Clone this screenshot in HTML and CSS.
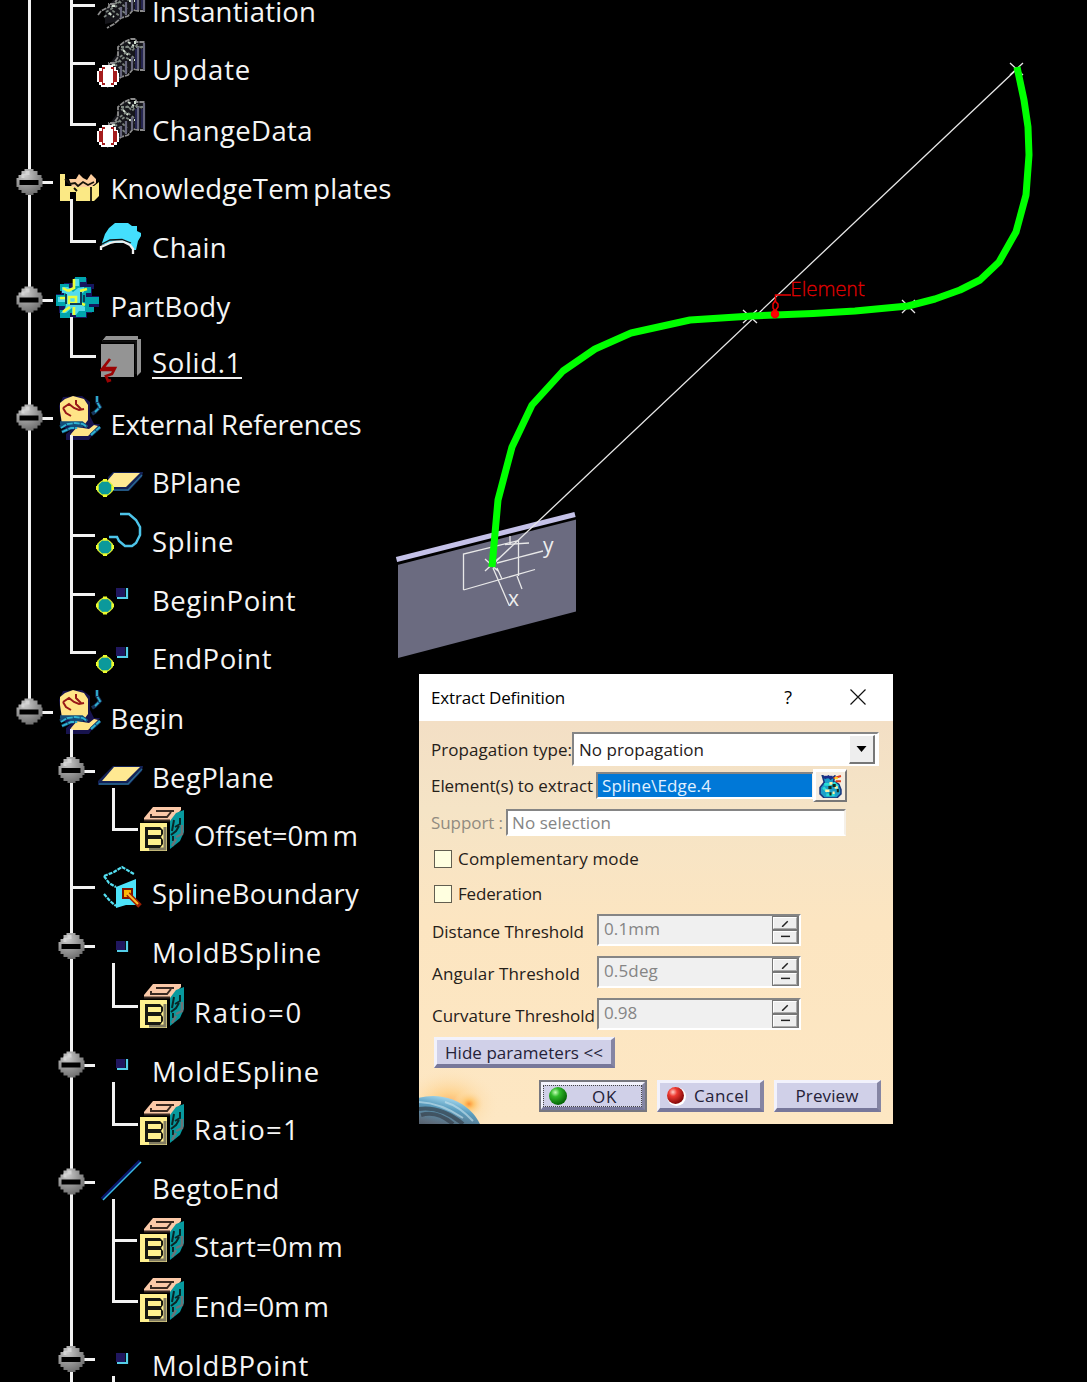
FILE: index.html
```html
<!DOCTYPE html>
<html lang="en">
<head>
<meta charset="utf-8">
<title>Extract Definition</title>
<link rel="stylesheet" href="styles.css">
</head>
<body>
<svg class="defs" aria-hidden="true">
  <defs>
    <radialGradient id="ball" cx=".35" cy=".25" r=".8"><stop offset="0" stop-color="#ccc"/><stop offset=".5" stop-color="#999"/><stop offset="1" stop-color="#6b6b6b"/></radialGradient>
    <radialGradient id="green" cx=".35" cy=".3" r=".7"><stop offset="0" stop-color="#c5ffb8"/><stop offset=".35" stop-color="#2fba2a"/><stop offset="1" stop-color="#056405"/></radialGradient>
    <radialGradient id="red" cx=".35" cy=".3" r=".7"><stop offset="0" stop-color="#ffd0c8"/><stop offset=".35" stop-color="#ee3a32"/><stop offset="1" stop-color="#850808"/></radialGradient>
    <radialGradient id="glow"><stop offset="0" stop-color="#ff9436"/><stop offset=".3" stop-color="#ffc468" stop-opacity=".9"/><stop offset="1" stop-color="#fde5c0" stop-opacity="0"/></radialGradient>
    <linearGradient id="planet" x1=".6" y1="0" x2=".45" y2=".6"><stop offset="0" stop-color="#a5d8ee"/><stop offset=".2" stop-color="#5a9dbf"/><stop offset=".5" stop-color="#5d6b7a"/><stop offset="1" stop-color="#18181c"/></linearGradient>

    <g id="node"><path d="M-5-13H4V-11H8V-7H12V-4H13V5H11V8H8V11H4V13H-4V11H-8V8H-11V5H-13V-4H-11V-7H-8V-11H-5Z" fill="url(#ball)"/><path d="M-8-8H-4V-11H0V-7H-5V-4H-8Z" fill="#d4d4d4"/><path d="M-10-2H9V3H-10Z" fill="#000"/></g>

    <g id="machine" fill="none" stroke-width="1.8">
      <path d="M19 17L27 3H48V32H34L22 42L8 45V32Z" fill="#16161b"/>
      <path d="M1 36L4 32L12 28V25H17L21 19V9L27 4L34 1H39V4H48M48 32H42L36 31L31 37L24 39L17 45L10 49" stroke="#8c8c8c" stroke-dasharray="5 1"/>
      <path d="M24 9H46M24 12L31 8L35 13L40 7L45 10M23 19L30 14L37 20M21 24L28 19L38 25M14 28L22 22L30 30M9 33L19 27L28 34M7 38L16 32L24 38" stroke="#7d867f" stroke-dasharray="3 2"/>
      <path d="M31 4L37 8M26 12L31 17M15 27H20M32 22H38M12 34L17 38M38 3V8" stroke="#d0ddce" stroke-width="2" stroke-dasharray="3 2"/>
      <path d="M41 9V31M47 5V32M35 19V32M29 23V36M24 28V39" stroke="#66667c" stroke-width="2.2"/>
      <path d="M39 11V31M45 11V30" stroke="#252550" stroke-width="2"/>
    </g>
    <g id="machine-ball"><use href="#machine"/><path d="M5 27H16V29H19V32H21V35H22V44H20V47H17V49H4V47H2V44H0V33H2V30H5Z" fill="#fff"/><path d="M8 29V31H6V45H8V47H5V44H2V33H5V29ZM14 29V31H16V45H14V47H17V44H20V33H17V29Z" fill="#a51c1c"/></g>
    <g id="templates"><path d="M0 0H5V12H34L39 8V22L34 27H16V18H10V27H0Z" fill="#fbe985"/><path d="M9 5H16L19 0L23 4L27 6L31 0L36 5V9L31 13H12Z" fill="#fdce9e"/><path d="M5 5L10 10L15 9L18 12L23 8L28 11L34 8M31 13V27M14 14L17 17" fill="none" stroke="#16130a" stroke-width="1.8"/></g>
    <g id="chain"><path d="M2 20L5 11L9 5L15 0H28L32 3H37V8L41 10V13L38 18L36 27H34L29 20L10 20L2 22Z" fill="#44dffd"/><path d="M1 27V24L10 20L17 18.500H23L30 22L33 26V31" fill="none" stroke="#eee" stroke-width="2.3"/><path d="M1 21.500L10 17L22 16.500L31 20" fill="none" stroke="#111" stroke-width="1.300"/></g>
    <g id="body"><path d="M8 6H18V1H31V7H38V12H36V19H43V30H36V36H31V41H10V36H3V24H0V17H5V11H8Z" fill="#16165e"/><path d="M19 0H30V5H24V10H35V16H30V20H43V27H33V30H38V35H30V40H20V36H14V41H4V33H9V29H0V18H8V14H4V7H13V11H18Z" fill="#00a5ad"/><path d="M17 2H23V9H18ZM6 10H12L17 15L22 11L28 10V15L24 18V27L29 30V34H23L20 38H16V31L10 36H5L10 30V25H2V20H10V16H6Z" fill="#55dcec"/><path d="M18 2V11L12 14M13 20H20V26H13ZM24 14L31 12M24 26L29 28M7 35L14 30M18 30V38M4 21H9M7 11L12 14" fill="none" stroke="#eaff39" stroke-width="2.600"/><path d="M25 15V27H14M28 18V25M10 17V27" fill="none" stroke="#0c3e5a" stroke-width="2"/></g>
    <g id="solid"><path d="M2 5L6 0H38V3H41V36L37 40V4H2Z" fill="#929292"/><path d="M1 8H34V41H1Z" fill="#949494"/><path d="M2 5.500H36V38" fill="none" stroke="#111" stroke-width="2"/><path d="M10 23L3 32H15L12 38L6 40L8 45L11 44M0 34H14" fill="none" stroke="#9b0303" stroke-width="2.700"/></g>
    <g id="refs"><path d="M5 1L24 0L32 6V20L36 28H42L31 44H8V38L13 34L4 31L1 10Z" fill="#17134d"/><path d="M2 7L7 3L15 0L26 3L30 9V24L27 28H4L2 15ZM13 38L19 31L31 33L36 29L40 30L30 40H12Z" fill="#ffe487"/><path d="M5 12L11 8L16 12L21 14L26 13M18 4V8L23 13M5 12L8 17L13 20" fill="none" stroke="#981818" stroke-width="2"/><path d="M39 0V6L42 11L37 16L34 18" fill="none" stroke="#17365d" stroke-width="3.600"/><path d="M2 27H15L24 27L29 31M2 31L9 28L17 29L25 30M4 36L13 32L19 31M33 39L42 31" fill="none" stroke="#134c78" stroke-width="3.500"/><path d="M39 0V6L42 11L37 16M3 32L9 28L17 27L25 28L29 31M4 36L13 32L19 32M33 39L42 31" fill="none" stroke="#2fb4d2" stroke-width="1.800" stroke-dasharray="6 1"/></g>
    <g id="plane"><path d="M15 0H45L44 5L31 19H0V15L3 12Z" fill="#132155"/><path d="M16 1H42L28 15H4Z" fill="#ffe992"/><path d="M1 18H30L44 3" fill="none" stroke="#286990" stroke-width="1.400"/></g>
    <g id="diamond"><path d="M-2-8H2L5-6L8-3V3L5 6L2 8H-2L-5 6L-8 3V-3L-5-6Z" fill="#d8f030"/><path d="M-2-9H2V9H-2ZM-9-2V2H9V-2Z" fill="#eefb2c"/><path d="M-3-6H3L6-3V3L3 6H-3L-6 3V-3Z" fill="#0b999b" stroke="#0b999b" stroke-width=".6"/></g>
    <g id="point"><path d="M0 0H9V9H0Z" fill="#20175f"/><path d="M1 10H11V0" fill="none" stroke="#54cee8" stroke-width="2.200"/></g>
    <g id="cube"><path d="M13 0H41V3L31 14H4V11Z" fill="#fbc9a8"/><path d="M30 14L36 6L44 3V25L40 34L30 42Z" fill="#07999e"/><path d="M0 16H27V44H0Z" fill="#fff08e"/><path d="M16 4H34M11 7V10H27L31 5M4 13.500H30" fill="none" stroke="#3a2a22" stroke-width="2"/><path d="M40 11V17L35 20M34 13L32 24M31 28L36 24L39 19M33 34V29" fill="none" stroke="#0a2626" stroke-width="2"/><path d="M42 18V27L36 30M32 39L36 32" fill="none" stroke="#6a7478" stroke-width="2.500"/><path d="M38 38L44 29V44H34Z" fill="#000"/><path d="M25 20V42H9" fill="none" stroke="#817b61" stroke-width="3"/><path d="M5 20H20L23 23V27L21 30L23 33V37L20 41H5ZM8 23V28H21V23ZM8 32V38H21V32Z" fill="#181812" fill-rule="evenodd"/><path d="M28.500 15V44" stroke="#000" stroke-width="3"/></g>
    <g id="boundary"><path d="M2 9L12 5L20 0L32 7M2 9L7 16L14 20M2 27L8 34L14 39" fill="none" stroke="#54dff1" stroke-width="2.200" stroke-dasharray="4 1"/><path d="M14 20L34 12V38H24L14 41Z" fill="#4de3fa"/><path d="M21 22H30V31H21Z" fill="#fcb700" stroke="#7d1500" stroke-width="2"/><path d="M26 27L38 39" stroke="#9c1d00" stroke-width="5"/><path d="M25 26L36 37" stroke="#ffbd25" stroke-width="2"/></g>
    <g id="segment"><path d="M0 38L38 0" stroke="#0b176b" stroke-width="3.600"/><path d="M1 39L39 1" stroke="#39bce3" stroke-width="1.400"/></g>

    <path id="v1" d="M29.500 0V64"/><path id="v2" d="M71.500 0V64"/><path id="v3" d="M113.500 0V64"/>
    <path id="v1e" d="M29.500 0V21"/><path id="v2e" d="M71.500 0V22.500H96"/><path id="v3e" d="M113.500 0V22.500H138"/>
    <path id="v2s" d="M71.500 39V64"/><path id="v3s" d="M113.500 39V64"/>
    <path id="h1" d="M42 22.500H53"/><path id="h2" d="M71.500 22.500H95"/><path id="h3" d="M113.500 22.500H137"/>
  </defs>
</svg>

<main class="workspace">
  <ul class="tree">
    <li class="row"><svg class="art l2"><use href="#v1"/><use href="#v2"/><use href="#h2"/><use href="#machine" x="97" y="-4"/></svg><span class="label" data-w="164">Instantiation</span></li>
    <li class="row"><svg class="art l2"><use href="#v1"/><use href="#v2"/><use href="#h2"/><use href="#machine-ball" x="97" y="-3"/></svg><span class="label" data-w="99">Update</span></li>
    <li class="row"><svg class="art l2"><use href="#v1"/><use href="#v2e"/><use href="#machine-ball" x="97" y="-4"/></svg><span class="label" data-w="161">ChangeData</span></li>
    <li class="row"><svg class="art l1"><use href="#v1"/><use href="#h1"/><use href="#node" x="29.500" y="22"/><use href="#templates" x="60" y="14"/><use href="#v2s"/></svg><span class="label" data-w="281">KnowledgeTem<i class="gap"></i>plates</span></li>
    <li class="row"><svg class="art l2"><use href="#v1"/><use href="#v2e"/><use href="#chain" x="100" y="4"/></svg><span class="label" data-w="75">Chain</span></li>
    <li class="row"><svg class="art l1"><use href="#v1"/><use href="#h1"/><use href="#node" x="29.500" y="21.500"/><use href="#body" x="56" y="-1"/><use href="#v2s"/></svg><span class="label" data-w="120">PartBody</span></li>
    <li class="row"><svg class="art l2"><use href="#v1"/><use href="#v2e"/><use href="#solid" x="100" y="2"/></svg><span class="label current" data-w="90">Solid.1</span></li>
    <li class="row"><svg class="art l1"><use href="#v1"/><use href="#h1"/><use href="#node" x="29.500" y="21.500"/><use href="#refs" x="58" y="0"/><use href="#v2s"/></svg><span class="label" data-w="251">External References</span></li>
    <li class="row"><svg class="art l2"><use href="#v1"/><use href="#v2"/><use href="#h2"/><use href="#plane" x="98" y="18"/><path d="M96 18H108V40H96Z" class="mask"/><use href="#diamond" x="105" y="34"/></svg><span class="label" data-w="89">BPlane</span></li>
    <li class="row"><svg class="art l2"><use href="#v1"/><use href="#v2"/><use href="#h2"/><path class="spline" d="M120 1H129L136 7L140 14V22L136 30L132 33H125L119 28L117 24H109"/><use href="#diamond" x="105" y="34"/></svg><span class="label" data-w="82">Spline</span></li>
    <li class="row"><svg class="art l2"><use href="#v1"/><use href="#v2"/><use href="#h2"/><use href="#point" x="116" y="16"/><use href="#diamond" x="105" y="33.500"/></svg><span class="label" data-w="144">BeginPoint</span></li>
    <li class="row"><svg class="art l2"><use href="#v1"/><use href="#v2e"/><use href="#point" x="116" y="17"/><use href="#diamond" x="105" y="34"/></svg><span class="label" data-w="120">EndPoint</span></li>
    <li class="row"><svg class="art l1"><use href="#v1e"/><use href="#h1"/><use href="#node" x="29.500" y="21.500"/><use href="#refs" x="58" y="0"/><use href="#v2s"/></svg><span class="label" data-w="74">Begin</span></li>
    <li class="row"><svg class="art l2"><use href="#v2"/><use href="#h2"/><use href="#node" x="71.500" y="21"/><use href="#plane" x="98" y="17"/><use href="#v3s"/></svg><span class="label" data-w="122">BegPlane</span></li>
    <li class="row"><svg class="art l3"><use href="#v2"/><use href="#v3e"/><use href="#cube" x="140"/></svg><span class="label" data-w="164">Offset=0m<i class="gap"></i>m</span></li>
    <li class="row"><svg class="art l2"><use href="#v2"/><use href="#h2"/><use href="#boundary" x="102" y="2"/></svg><span class="label" data-w="207">SplineBoundary</span></li>
    <li class="row"><svg class="art l2"><use href="#v2"/><use href="#h2"/><use href="#node" x="71.500" y="22"/><use href="#point" x="116" y="17"/><use href="#v3s"/></svg><span class="label" data-w="170">MoldBSpline</span></li>
    <li class="row"><svg class="art l3"><use href="#v2"/><use href="#v3e"/><use href="#cube" x="140"/></svg><span class="label" data-w="109">Ratio=0</span></li>
    <li class="row"><svg class="art l2"><use href="#v2"/><use href="#h2"/><use href="#node" x="71.500" y="21.500"/><use href="#point" x="116" y="16"/><use href="#v3s"/></svg><span class="label" data-w="168">MoldESpline</span></li>
    <li class="row"><svg class="art l3"><use href="#v2"/><use href="#v3e"/><use href="#cube" x="140" y="-1"/></svg><span class="label up" data-w="106">Ratio=1</span></li>
    <li class="row"><svg class="art l2"><use href="#v2"/><use href="#h2"/><use href="#node" x="71.500" y="21.500"/><use href="#segment" x="102" y="1"/><use href="#v3s"/></svg><span class="label" data-w="128">BegtoEnd</span></li>
    <li class="row"><svg class="art l3"><use href="#v2"/><use href="#v3"/><use href="#h3"/><use href="#cube" x="140"/></svg><span class="label" data-w="149">Start=0m<i class="gap"></i>m</span></li>
    <li class="row"><svg class="art l3"><use href="#v2"/><use href="#v3e"/><use href="#cube" x="140" y="-1"/></svg><span class="label up" data-w="135">End=0m<i class="gap"></i>m</span></li>
    <li class="row"><svg class="art l2"><use href="#v2"/><use href="#h2"/><use href="#node" x="71.500" y="22"/><use href="#point" x="116" y="16"/><use href="#v3s"/></svg><span class="label" data-w="157">MoldBPoint</span></li>
  </ul>

  <section class="viewport">
    <svg class="scene" viewBox="395 0 692 1382">
      <path d="M398 564L576 518V611.500L398 658Z" fill="#6b6b80"/>
      <path d="M397 563.500L576 518" stroke="#000" stroke-width="3"/>
      <path d="M396.500 559.500L575 514.500" stroke="#c4c1e8" stroke-width="5"/>
      <g class="wire">
        <path d="M1017 69L492 565"/>
        <path d="M463.500 590V554L518.500 540.500V576M463.500 590L535 569.500"/>
        <path d="M497 563L543 551M493 568L509 605M497 568L502 579M517 576L522 589M510 536V545M505 544.500L529 543M485 559L498 571M485 571L499 558"/>
        <path d="M1010 63L1023 75M1010 75L1023 63M743 310L757 323M743 323L757 310M902 300L915 313M902 313L915 300"/>
      </g>
      <path class="curve" d="M1017 67L1024 100L1028 127L1029 155L1026 195L1016 232L999 262L980 280L960 290L935 299L908 306L855 311L813 313.500L752 316L690 320L631 333L595 349L563 371L532 405L512 447L498 500L492 567"/>
      <text class="axis" x="543" y="553">y</text>
      <text class="axis" x="508" y="606">x</text>
      <g fill="none" stroke="#e00" stroke-width="1.500"><path d="M791 295H775.500V301M775 301L773 304V308L775 311L778 307V304Z"/><circle cx="775" cy="314" r="3.500" fill="red"/></g>
      <text class="tag" x="790" y="295.500" textLength="75">Element</text>
    </svg>

    <div class="dialog">
      <header class="title"><span data-w="134">Extract Definition</span><span class="help">?</span>
        <svg class="close" viewBox="0 0 16 16"><path d="M.5 .5L15.500 15.500M15.500 .5L.5 15.500"/></svg></header>
      <div class="body">
        <div class="line combo-line"><span class="cap" data-w="141">Propagation type:</span>
          <div class="combo"><span data-w="125">No propagation</span><b class="drop"><svg viewBox="0 0 10 6"><path d="M0 0H10L5 6Z"/></svg></b></div></div>
        <div class="line pick-line"><span class="cap wide" data-w="162">Element(s) to extract</span>
          <div class="field selected"><span data-w="109">Spline\Edge.4</span></div>
          <button class="bag"><svg viewBox="0 0 22 22"><path d="M3 0L6 3L9 1L11 4L15 1L14 6L19 9L21 14V18L17 22H5L1 18V12L5 7Z" fill="#1c9fc9" stroke="#18367c" stroke-width="1.500"/><path d="M5 9H12M4 12L8 16M7 19H15M14 7L18 11" stroke="#27dfd5" stroke-width="2.500"/><path d="M10 8H13M15 12H18M6 15H10M13 17H15" stroke="#fff1a4" stroke-width="2.500"/><path d="M13 10H16M9 12H12M17 15H19M10 18H12" stroke="#182b17" stroke-width="3"/><path d="M5 2H13" stroke="#1d2d8c" stroke-width="2.500"/><path d="M14 3L21 1M16 6H21" stroke="#e13c17" stroke-width="2"/><path d="M15 3H18" stroke="#ffd62b" stroke-width="2"/></svg></button></div>
        <div class="line support"><span class="cap" data-w="72">Support :</span><div class="field"><span data-w="99">No selection</span></div></div>
        <label class="line check"><i class="box"></i><span data-w="181">Complementary mode</span></label>
        <label class="line check second"><i class="box"></i><span data-w="84">Federation</span></label>
        <div class="line spin first"><span class="cap" data-w="152">Distance Threshold</span><div class="number"><span data-w="56">0.1mm</span><b class="step"><i><svg viewBox="0 0 8 6"><path d="M1 6L6 1"/></svg></i><i><svg viewBox="0 0 8 6"><path d="M0 2H8"/></svg></i></b></div></div>
        <div class="line spin"><span class="cap" data-w="148">Angular Threshold</span><div class="number"><span data-w="54">0.5deg</span><b class="step"><i><svg viewBox="0 0 8 6"><path d="M1 6L6 1"/></svg></i><i><svg viewBox="0 0 8 6"><path d="M0 2H8"/></svg></i></b></div></div>
        <div class="line spin"><span class="cap" data-w="163">Curvature Threshold</span><div class="number"><span data-w="33">0.98</span><b class="step"><i><svg viewBox="0 0 8 6"><path d="M1 6L6 1"/></svg></i><i><svg viewBox="0 0 8 6"><path d="M0 2H8"/></svg></i></b></div></div>
        <button class="btn hide"><span data-w="158">Hide parameters &lt;&lt;</span></button>
        <footer class="actions">
          <button class="btn ok"><svg viewBox="0 0 20 20"><circle cx="10" cy="10" r="9" fill="url(#green)"/></svg><span data-w="25">OK</span></button>
          <button class="btn cancel"><svg viewBox="0 0 20 20"><circle cx="10.500" cy="10.500" r="9.500" fill="#fff"/><circle cx="9.500" cy="9.500" r="8.500" fill="url(#red)"/></svg><span data-w="55">Cancel</span></button>
          <button class="btn preview"><span data-w="63">Preview</span></button>
        </footer>
        <svg class="earth" viewBox="0 0 80 60"><ellipse cx="30" cy="40" rx="50" ry="36" fill="url(#glow)" opacity=".65"/><ellipse cx="50" cy="40" rx="16" ry="14" fill="url(#glow)"/><ellipse cx="14" cy="78" rx="51" ry="46" fill="url(#planet)"/><path d="M0 45Q22 42 44 60M2 51Q18 46 34 60" fill="none" stroke="#2e333c" stroke-width="4" opacity=".6"/><path d="M0 38Q22 39 44 54M26 38Q40 42 54 57" fill="none" stroke="#c9e4ee" stroke-width="2" opacity=".6"/></svg>
      </div>
    </div>
  </section>
</main>
<script src="fit.js"></script>
</body>
</html>
```
FILE: styles.css
```css
* { box-sizing: border-box; }
body { margin: 0; background: #000; overflow: hidden; font-family: "Open Sans", "Noto Sans", sans-serif; }
.defs { display: block; width: 0; height: 0; }
.workspace { display: flex; width: 1087px; height: 1382px; overflow: hidden; }

.tree {
  flex: 0 0 395px; margin: -17px 0 0; padding: 0; list-style: none;
  display: grid; align-content: start;
  grid-template-rows: 58px 61px 58px 59px 59px 56px 62px 58px 59px 59px 58px 60px 59px 58px 58px 59px 60px 59px 59px 58px 58px 61px 58px 45px;
}
.row { display: flex; align-items: flex-start; min-width: 0; }
.art { flex: none; height: 58px; overflow: visible; fill: none; stroke: #f2f2f2; stroke-width: 3; }
.art use:not([href^="#v"]):not([href^="#h"]) { stroke: none; }
.l1 { width: 110.500px; }
.l2 { width: 152px; }
.l3 { width: 194px; }
.mask { fill: #000; stroke: none; }
.art .spline { stroke: #4dc4e9; stroke-width: 2.500; }
.label { flex: none; font-size: 27.500px; line-height: 40px; padding-top: 9px; color: #f5f5f5; white-space: nowrap; }
.label.up { padding-top: 8px; }
.label.current { height: 44.500px; border-bottom: 2.500px solid #f2f2f2; }
.gap { display: inline-block; width: 4px; }

.viewport { position: relative; flex: 1; }
.scene { display: block; width: 692px; height: 1382px; }
.wire { fill: none; stroke: #e8e8e8; stroke-width: 1.300; }
.curve { fill: none; stroke: #0f0; stroke-width: 7; stroke-linejoin: round; }
.axis { fill: #eee; font: 21px "Open Sans", sans-serif; }
.tag { fill: #e60000; stroke: #e60000; stroke-width: .3; font: 19px "DejaVu Sans", sans-serif; font-weight: 200; }

.dialog { position: absolute; left: 24px; top: 674px; width: 474px; height: 450px; display: flex; flex-direction: column; font: 17px "Open Sans", "Noto Sans", sans-serif; color: #252019; overflow: hidden; }
.dialog span { white-space: nowrap; flex: none; }
.title { flex: none; height: 46.500px; background: #fff; color: #000; display: flex; align-items: center; padding: 0 27px 0 12px; }
.help { margin-left: auto; margin-right: 58px; font-size: 18px; }
.close { width: 16px; height: 16px; fill: none; stroke: #111; stroke-width: 1.200; }
.body { flex: 1; position: relative; padding: 11.500px 12px 0; background: linear-gradient(#f3dfc5, #f5e4c6 22%, #fce5c1 50%, #fde7c3); }
.line { display: flex; align-items: center; }
.combo-line { height: 34px; }
.combo { display: flex; align-items: center; flex: none; width: 307px; height: 34px; padding: 0 2px 0 5px; border: 2px solid #858585; border-right-color: #fff; border-bottom-color: #fff; background: #fff; }
.drop { margin-left: auto; width: 26px; height: 29px; display: flex; align-items: center; justify-content: center; background: #eee; border: 1px solid #fff; border-right: 2px solid #777; border-bottom: 2px solid #777; }
.drop svg { width: 11px; height: 6px; }
.combo-line .cap { width: 141px; }
.pick-line { height: 33px; margin-top: 3px; }
.wide { width: 165px; }
.field { height: 27px; display: flex; align-items: center; padding-left: 4px; background: #fff; border: 2px solid #858585; border-right-color: #f5f0e8; border-bottom-color: #fff; }
.selected { width: 218px; background: #0078d7; color: #e2f1ff; }
.bag { width: 34px; height: 33px; margin-left: -1px; padding: 0; display: flex; align-items: center; justify-content: center; background: #f5ecdf; border: 3px solid #fff; border-right: 2px solid #777; border-bottom: 2px solid #777; }
.bag svg { width: 23px; height: 23px; }
.support { height: 27px; margin-top: 7px; color: #918b80; }
.support .cap { width: 75px; }
.support .field { width: 340px; color: #858585; }
.check { height: 19px; margin-top: 13px; padding-left: 3px; }
.check.second { margin-top: 16px; }
.box { width: 18px; height: 18px; margin-right: 6px; border: 1.500px solid #625e50; background: #ffffe0; }
.spin { height: 32px; margin-top: 10px; padding-left: 1px; }
.spin.first { margin-top: 11px; }
.spin .cap { width: 165px; padding-top: 2px; }
.number { display: flex; align-items: center; width: 204px; height: 32px; padding-left: 5px; background: #f0f0f0; border: 2px solid #858585; border-bottom-color: #fff; border-right-color: #fff; color: #858585; }
.number > span { padding-bottom: 3px; }
.step { margin-left: auto; width: 27px; height: 28px; display: flex; flex-direction: column; gap: 2px; padding: 1px 2px 1px 1px; background: #777; }
.step i { flex: 1; display: flex; align-items: center; justify-content: center; background: #eee; border: 1px solid #fff; border-right-color: #aaa; border-bottom-color: #aaa; }
.step svg { width: 9px; height: 7px; fill: none; stroke: #222; stroke-width: 1.300; }
.btn { display: flex; align-items: center; justify-content: center; padding: 0; height: 32px; font: inherit; color: #252238; background: #d0d0e8; border: 3px solid #f2f2fc; border-right: 4px solid #8585a3; border-bottom: 4px solid #77779a; }
.hide { width: 181px; height: 31px; margin: 7px 0 0 3px; }
.actions { display: flex; position: relative; z-index: 1; margin: 12px 0 0 108px; }
.btn svg { width: 20px; height: 20px; flex: none; }
.ok { width: 108px; margin-right: 10px; justify-content: flex-start; padding-left: 5px; outline: 2px solid #77777f; outline-offset: -2px; border-width: 5px 5px 5px 4px; background-clip: padding-box; position: relative; }
.ok::after { content: ""; position: absolute; inset: 0; border: 1px dotted #444; }
.ok span { margin-left: 24px; }
.cancel { width: 107px; margin-right: 10px; justify-content: flex-start; padding-left: 6px; }
.cancel span { margin-left: 8px; }
.preview { width: 107px; }
.earth { position: absolute; left: 0; bottom: 0; width: 80px; height: 60px; }
```
FILE: fit.js
```js
// Spread each caption's letters so that it fills its nominal width.
document.querySelectorAll("[data-w]").forEach(function (el) {
  var range = document.createRange();
  range.selectNodeContents(el);
  var natural = range.getBoundingClientRect().width;
  var spacing = (Number(el.dataset.w) - natural) / el.textContent.length;
  el.style.letterSpacing = spacing.toFixed(3) + "px";
});
```
